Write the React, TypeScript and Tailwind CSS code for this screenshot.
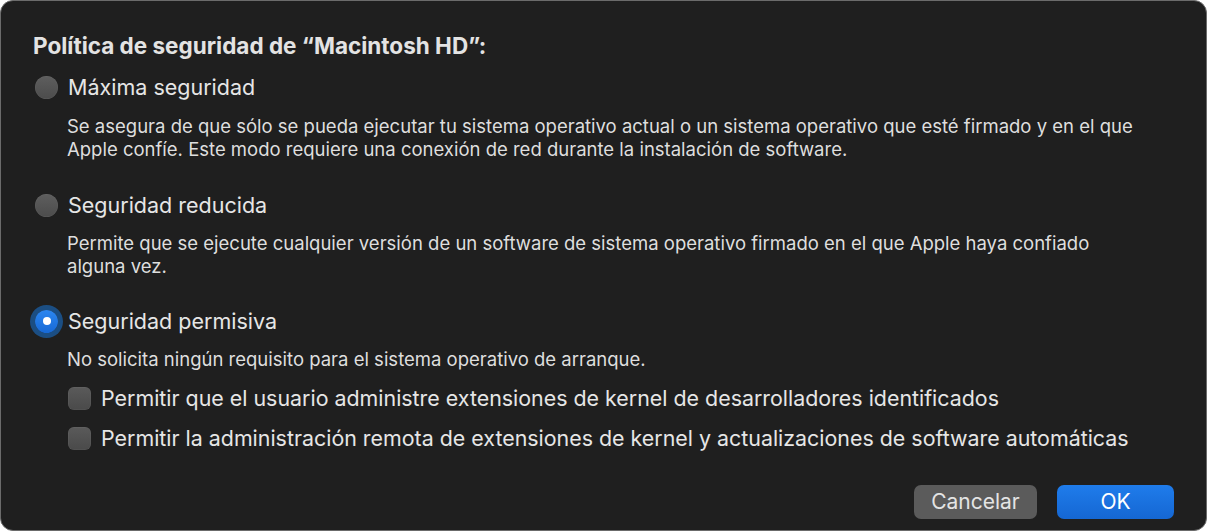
import type { ReactNode } from 'react'

function Radio({ checked }: { checked?: boolean }) {
  if (checked) {
    return (
      <span className="relative flex h-[23px] w-[23px] shrink-0 items-center justify-center rounded-full bg-gradient-to-b from-[#2b86f0] to-[#1769d6] ring-[5px] ring-[#1a5a9c]/80">
        <span className="h-[8px] w-[8px] rounded-full bg-white" />
      </span>
    )
  }
  return (
    <span className="block h-[23px] w-[23px] shrink-0 rounded-full bg-gradient-to-b from-[#5e5e5e] to-[#4c4c4c] shadow-[inset_0_0_0_0.5px_rgba(255,255,255,0.08)]" />
  )
}

function Checkbox() {
  return (
    <span className="block h-[23px] w-[23px] shrink-0 rounded-[6px] bg-gradient-to-b from-[#5a5a5a] to-[#4a4a4a] shadow-[inset_0_0_0_0.5px_rgba(255,255,255,0.08)]" />
  )
}

function Option({ checked, label, children, className }: { checked?: boolean; label: string; children: ReactNode; className?: string }) {
  return (
    <div className={className}>
      <div className="flex h-[24px] items-center gap-[10px] pl-[34px]">
        <Radio checked={checked} />
        <span className="text-[21.5px] text-[#e6e6e6]">{label}</span>
      </div>
      {children}
    </div>
  )
}

export default function App() {
  return (
    <div className="h-[532px] w-[1208px] bg-white font-['Inter','Liberation_Sans',sans-serif]">
      <div className="flex h-[531px] w-[1207px] flex-col rounded-[13px] border border-[#6b6b6b] bg-[#1f1f1f] pt-[33px]">
        <h1 className="pl-[32px] text-[22.5px] font-bold leading-[24px] text-[#e3e3e3]">
          Política de seguridad de “Macintosh HD”:
        </h1>

        <Option label="Máxima seguridad" className="mt-[17px]">
          <p className="mt-[16px] pl-[66px] text-[18.5px] leading-[23px] text-[#dedede]">
            Se asegura de que sólo se pueda ejecutar tu sistema operativo actual o un sistema operativo que esté firmado y en el que
            <br />
            Apple confíe. Este modo requiere una conexión de red durante la instalación de software.
          </p>
        </Option>

        <Option label="Seguridad reducida" className="mt-[32px]">
          <p className="mt-[15px] pl-[66px] text-[18.5px] leading-[23px] text-[#dedede]">
            Permite que se ejecute cualquier versión de un software de sistema operativo firmado en el que Apple haya confiado
            <br />
            alguna vez.
          </p>
        </Option>

        <Option checked label="Seguridad permisiva" className="mt-[31px]">
          <p className="mt-[15px] pl-[66px] text-[18.5px] leading-[23px] text-[#dedede]">
            No solicita ningún requisito para el sistema operativo de arranque.
          </p>
          <div className="mt-[15px] flex flex-col gap-[16px] pl-[67px]">
            <label className="flex h-[24px] items-center gap-[10px]">
              <Checkbox />
              <span className="text-[21.4px] text-[#e6e6e6]">
                Permitir que el usuario administre extensiones de kernel de desarrolladores identificados
              </span>
            </label>
            <label className="flex h-[24px] items-center gap-[10px]">
              <Checkbox />
              <span className="text-[21.4px] text-[#e6e6e6]">
                Permitir la administración remota de extensiones de kernel y actualizaciones de software automáticas
              </span>
            </label>
          </div>
        </Option>

        <div className="mt-auto mb-[11px] flex justify-end gap-[20px] pr-[32px]">
          <button className="h-[34px] w-[123px] rounded-[7px] bg-[#5b5b5b] text-[21px] text-[#e4e4e4]">Cancelar</button>
          <button className="h-[34px] w-[117px] rounded-[7px] bg-gradient-to-b from-[#1f7ceb] to-[#1567d3] text-[21px] text-white">OK</button>
        </div>
      </div>
    </div>
  )
}
